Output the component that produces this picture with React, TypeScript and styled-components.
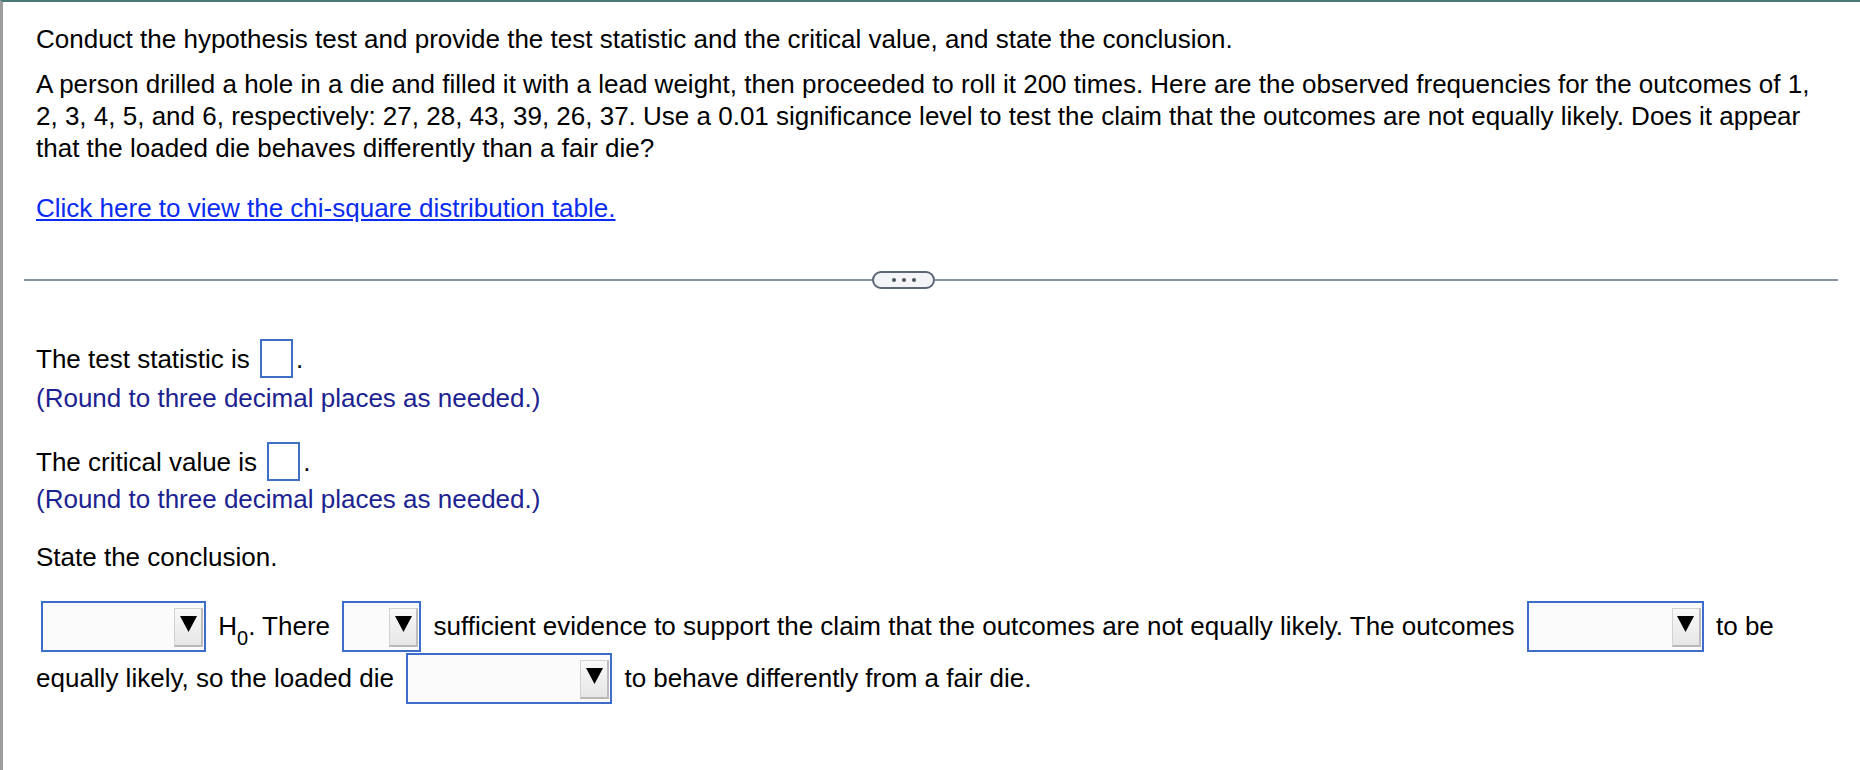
import React from "react";
import styled, { createGlobalStyle } from "styled-components";

const GlobalStyle = createGlobalStyle`
  html, body {
    margin: 0;
    padding: 0;
    background: #ffffff;
  }
  body {
    font-family: "Liberation Sans", Arial, Helvetica, sans-serif;
    color: #000000;
  }
`;

const Frame = styled.div`
  box-sizing: border-box;
  min-height: 770px;
  border-top: 2px solid #4a7778;
  border-left: 3px solid #9d9d9d;
  padding: 21px 22px 0 21px;
  font-size: 26px;
`;

const Section = styled.div`
  padding: 0 20px 0 12px;
`;

const Para = styled.p<{ $mt?: number }>`
  margin: ${(p) => p.$mt ?? 0}px 0 0;
  line-height: 32px;
`;

const Link = styled.a`
  color: #0a2cf2;
  text-decoration: underline;
  cursor: pointer;
`;

const Divider = styled.div`
  display: flex;
  align-items: center;
  height: 18px;
  margin-top: 47px;
`;

const Rule = styled.div<{ $w?: number }>`
  height: 2px;
  background: #8893a3;
  flex: ${(p) => (p.$w ? `0 0 ${p.$w}px` : "1 1 auto")};
`;

const MorePill = styled.button`
  box-sizing: border-box;
  flex: 0 0 63px;
  height: 18px;
  padding: 0;
  border: 2px solid #5d6676;
  border-radius: 9px;
  background: #f3f4f6;
  display: flex;
  align-items: center;
  justify-content: center;
  gap: 6px;
  cursor: pointer;
`;

const Dot = styled.span`
  width: 4px;
  height: 4px;
  border-radius: 50%;
  background: #4f5663;
`;

const AnswerLine = styled.div<{ $mt: number }>`
  margin-top: ${(p) => p.$mt}px;
  line-height: 32px;
`;

const Note = styled.div<{ $mt: number }>`
  margin-top: ${(p) => p.$mt}px;
  line-height: 32px;
  color: #1c2391;
`;

const InputBox = styled.span`
  display: inline-block;
  box-sizing: border-box;
  width: 33px;
  height: 39px;
  margin: 0 3px;
  border: 2px solid #3e6fc7;
  background: #ffffff;
  vertical-align: -10px;
`;

const Conclusion = styled.div`
  margin-top: 27px;
  line-height: 52px;
`;

const Select = styled.span<{ $w: number }>`
  display: inline-block;
  box-sizing: border-box;
  width: ${(p) => p.$w}px;
  height: 51px;
  margin: 0 5px;
  border: 2px solid #3d6dca;
  background: #fbfbfb;
  vertical-align: -17px;
  overflow: hidden;
`;

const SelectInner = styled.span`
  box-sizing: border-box;
  display: flex;
  justify-content: flex-end;
  align-items: flex-start;
  height: 100%;
  padding: 5px 1px 0 0;
`;

const ArrowBtn = styled.span`
  box-sizing: border-box;
  width: 29px;
  height: 39px;
  display: flex;
  justify-content: center;
  align-items: flex-start;
  padding-top: 7px;
  background: linear-gradient(#f8f8f8, #e6e6e6);
  border: 1px solid #d2d2d2;
  border-right: 2px solid #bcbcbc;
  border-bottom: 2px solid #b8b8b8;
`;

const Sub = styled.sub`
  font-size: 20px;
  line-height: 0;
  vertical-align: -10px;
`;

const Arrow = () => (
  <svg width="17" height="16" viewBox="0 0 17 16" aria-hidden="true">
    <polygon points="0,0 17,0 8.5,16" fill="#000" />
  </svg>
);

const Dropdown = ({ w }: { w: number }) => (
  <Select $w={w}>
    <SelectInner>
      <ArrowBtn>
        <Arrow />
      </ArrowBtn>
    </SelectInner>
  </Select>
);

export default function App() {
  return (
    <>
      <GlobalStyle />
      <Frame>
        <Section>
          <Para>
            Conduct the hypothesis test and provide the test statistic and the critical value, and state the conclusion.
          </Para>
          <Para $mt={13}>
            A person drilled a hole in a die and filled it with a lead weight, then proceeded to roll it 200 times. Here are the
            observed frequencies for the outcomes of 1, 2, 3, 4, 5, and 6, respectively: 27, 28, 43, 39, 26, 37. Use a 0.01
            significance level to test the claim that the outcomes are not equally likely. Does it appear that the loaded die
            behaves differently than a fair die?
          </Para>
          <Para $mt={28}>
            <Link>Click here to view the chi-square distribution table.</Link>
          </Para>
        </Section>

        <Divider>
          <Rule $w={848} />
          <MorePill aria-label="more">
            <Dot />
            <Dot />
            <Dot />
          </MorePill>
          <Rule />
        </Divider>

        <Section>
          <AnswerLine $mt={50}>
            The test statistic is <InputBox />.
          </AnswerLine>
          <Note $mt={4}>(Round to three decimal places as needed.)</Note>
          <AnswerLine $mt={28}>
            The critical value is <InputBox />.
          </AnswerLine>
          <Note $mt={2}>(Round to three decimal places as needed.)</Note>
          <AnswerLine $mt={26}>State the conclusion.</AnswerLine>
          <Conclusion>
            <Dropdown w={165} /> H<Sub>0</Sub>. There <Dropdown w={79} /> sufficient evidence to support the claim that the
            outcomes are not equally likely. The outcomes <Dropdown w={177} /> to be equally likely, so the loaded die{" "}
            <Dropdown w={206} /> to behave differently from a fair die.
          </Conclusion>
        </Section>
      </Frame>
    </>
  );
}
